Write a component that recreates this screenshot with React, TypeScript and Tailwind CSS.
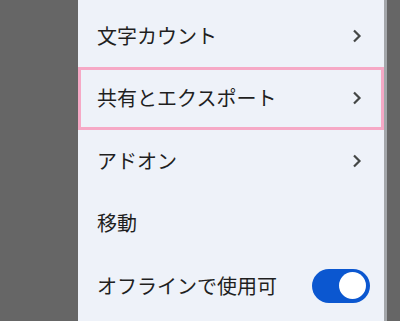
import React from "react";

type Row = { label: string; kind: "chevron" | "none" | "toggle"; focused?: boolean };

const rows: Row[] = [
  { label: "文字カウント", kind: "chevron" },
  { label: "共有とエクスポート", kind: "chevron", focused: true },
  { label: "アドオン", kind: "chevron" },
  { label: "移動", kind: "none" },
  { label: "オフラインで使用可", kind: "toggle" },
];

function Chevron() {
  return (
    <svg width="10" height="14" viewBox="0 0 10 14" className="mr-[22px]">
      <polyline points="2,1.5 7.5,7 2,12.5" fill="none" stroke="#444746" strokeWidth="2.2" />
    </svg>
  );
}

function Toggle() {
  return (
    <div className="mr-[14px] flex h-[34px] w-[58px] items-center justify-end rounded-full bg-[#0b57d0] pr-[4px]">
      <div className="h-[27px] w-[27px] rounded-full bg-white" />
    </div>
  );
}

export default function App() {
  return (
    <div
      className="flex h-[321px] w-[400px] overflow-hidden bg-[#666666]"
      style={{ fontFamily: '"Noto Sans CJK JP", "Noto Sans", sans-serif' }}
    >
      <div className="w-[78px] shrink-0 bg-[#666666]" />
      <div className="w-[306px] shrink-0 bg-[#eef2f9] pt-[4.5px]">
        {rows.map((row) => (
          <div
            key={row.label}
            className={
              row.focused
                ? "flex h-[62.5px] items-center justify-between border-[3px] border-[#f6a9c6] pl-[16px]"
                : "flex h-[62.5px] items-center justify-between pl-[19px]"
            }
          >
            <span className="text-[20px] leading-none text-[#1f1f1f]">{row.label}</span>
            {row.kind === "chevron" && (
              <span className={row.focused ? "-mr-[3px]" : ""}>
                <Chevron />
              </span>
            )}
            {row.kind === "toggle" && <Toggle />}
          </div>
        ))}
      </div>
      <div className="w-[3px] shrink-0 bg-[#a3a6aa]" />
      <div className="flex-1 bg-[#666666]" />
    </div>
  );
}
